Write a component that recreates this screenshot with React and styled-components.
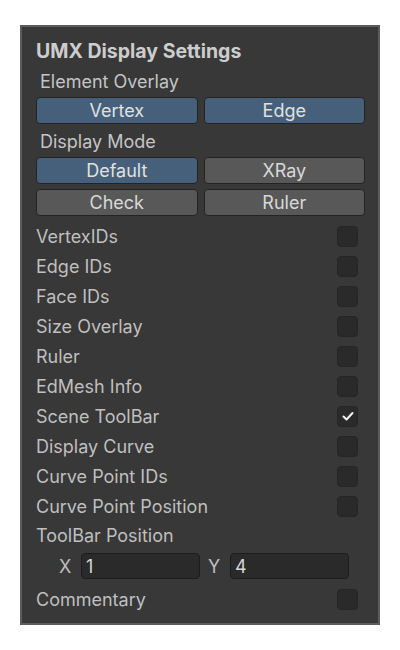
import React, { useState } from "react";
import styled, { createGlobalStyle } from "styled-components";

const Global = createGlobalStyle`
  html, body { margin: 0; padding: 0; background: #ffffff; }
  body { font-family: Inter, "Noto Sans", "Liberation Sans", sans-serif; }
  * { box-sizing: border-box; }
`;

const Page = styled.div`
  padding: 25px 20px;
`;

const Panel = styled.section`
  width: 360px;
  background: #383838;
  border: 2px solid #5c5c5c;
  padding: 12px 20px 9px 14px;
  display: flex;
  flex-direction: column;
  color: #c2c2c2;
`;

const Title = styled.h1`
  margin: 0;
  height: 24px;
  line-height: 24px;
  font-size: 19.5px;
  font-weight: 700;
  color: #cdcdcd;
`;

const SectionLabel = styled.div`
  height: 30px;
  line-height: 30px;
  font-size: 18px;
  padding-left: 4px;
  margin-top: ${(p) => p.$mt || 0}px;
  color: #c4c4c4;
`;

const ButtonGrid = styled.div`
  display: grid;
  grid-template-columns: 1fr 1fr;
  column-gap: 6px;
  row-gap: 5px;
  margin-right: -7px;
  margin-bottom: ${(p) => p.$mb || 0}px;
`;

const ToggleButton = styled.button`
  height: 27px;
  border: 1px solid #232323;
  border-radius: 4px;
  background: ${(p) => (p.$active ? "#46607c" : "#585858")};
  color: ${(p) => (p.$active ? "#e0e0e0" : "#d8d8d8")};
  font-family: inherit;
  font-size: 18px;
  line-height: 25px;
  padding: 0;
  cursor: pointer;
`;

const Row = styled.label`
  height: 30px;
  display: flex;
  align-items: center;
  justify-content: space-between;
  font-size: 18px;
  color: #bfbfbf;
  margin-top: ${(p) => p.$mt || 0}px;
`;

const Box = styled.span`
  width: 21px;
  height: 21px;
  border-radius: 4px;
  background: #2a2a2a;
  border: 1px solid #262626;
  display: flex;
  align-items: center;
  justify-content: center;
`;

const PlainLabel = styled.div`
  height: 30px;
  line-height: 30px;
  font-size: 18px;
  color: #bfbfbf;
`;

const InputRow = styled.div`
  height: 30px;
  display: flex;
  align-items: center;
  gap: 8px;
  padding-left: 23px;
`;

const Field = styled.div`
  display: flex;
  align-items: center;
`;

const FieldLabel = styled.span`
  width: 22px;
  font-size: 18px;
  color: #bfbfbf;
`;

const NumInput = styled.input`
  width: 119px;
  height: 26px;
  border: 1px solid #1c1c1c;
  border-radius: 4px;
  background: #2a2a2a;
  color: #d4d4d4;
  font-family: inherit;
  font-size: 18px;
  padding: 0 4px;
  outline: none;
`;

const Check = ({ on }) => (
  <Box>
    {on && (
      <svg width="14" height="14" viewBox="0 0 14 14">
        <polyline
          points="2.5,7.5 5.5,10.5 11.5,4"
          fill="none"
          stroke="#f2f2f2"
          strokeWidth="2"
          strokeLinecap="round"
          strokeLinejoin="round"
        />
      </svg>
    )}
  </Box>
);

const toggles = [
  ["VertexIDs", false],
  ["Edge IDs", false],
  ["Face IDs", false],
  ["Size Overlay", false],
  ["Ruler", false],
  ["EdMesh Info", false],
  ["Scene ToolBar", true],
  ["Display Curve", false],
  ["Curve Point IDs", false],
  ["Curve Point Position", false],
];

export default function App() {
  const [mode] = useState("Default");
  return (
    <>
      <Global />
      <Page>
        <Panel>
          <Title>UMX Display Settings</Title>
          <SectionLabel $mt={4}>Element Overlay</SectionLabel>
          <ButtonGrid>
            <ToggleButton $active>Vertex</ToggleButton>
            <ToggleButton $active>Edge</ToggleButton>
          </ButtonGrid>
          <SectionLabel $mt={3}>Display Mode</SectionLabel>
          <ButtonGrid $mb={5}>
            {["Default", "XRay", "Check", "Ruler"].map((m) => (
              <ToggleButton key={m} $active={m === mode}>
                {m}
              </ToggleButton>
            ))}
          </ButtonGrid>
          {toggles.map(([name, on]) => (
            <Row key={name}>
              <span>{name}</span>
              <Check on={on} />
            </Row>
          ))}
          <PlainLabel>ToolBar Position</PlainLabel>
          <InputRow>
            <Field>
              <FieldLabel>X</FieldLabel>
              <NumInput defaultValue="1" />
            </Field>
            <Field>
              <FieldLabel>Y</FieldLabel>
              <NumInput defaultValue="4" />
            </Field>
          </InputRow>
          <Row $mt={3}>
            <span>Commentary</span>
            <Check on={false} />
          </Row>
        </Panel>
      </Page>
    </>
  );
}
